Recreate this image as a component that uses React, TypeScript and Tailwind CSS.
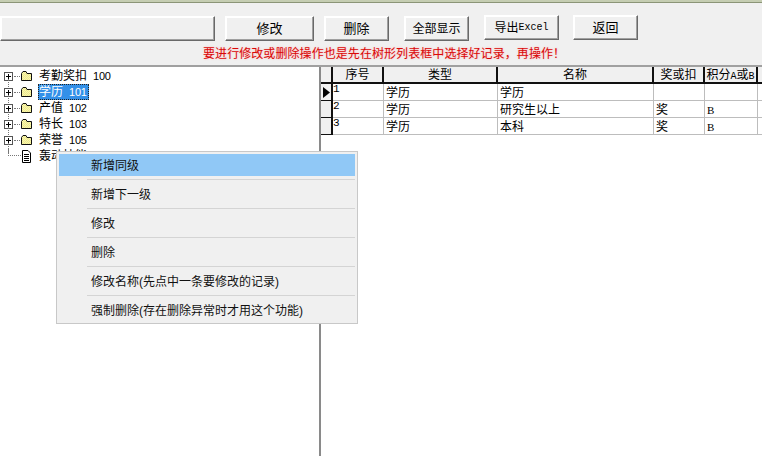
import React from 'react';

const CJK = "font-['Liberation_Sans','Noto_Sans_CJK_SC',sans-serif]";
const MONO = "font-['Liberation_Mono','Noto_Sans_CJK_SC',monospace]";
const SERIF = "font-['Liberation_Serif',serif]";

const TREE = [
  { label: '考勤奖扣', code: '100' },
  { label: '学历', code: '101', selected: true },
  { label: '产值', code: '102' },
  { label: '特长', code: '103' },
  { label: '荣誉', code: '105' },
];

const MENU = [
  '新增同级',
  '新增下一级',
  '修改',
  '删除',
  '修改名称(先点中一条要修改的记录)',
  '强制删除(存在删除异常时才用这个功能)',
];

const COLUMNS = [
  { title: '序号', width: 'w-[51px]' },
  { title: '类型', width: 'w-[114px]' },
  { title: '名称', width: 'w-[156px]' },
  { title: '奖或扣', width: 'w-[51px]' },
  { title: '积分', width: 'w-[53px]' },
];

const ROWS = [
  ['1', '学历', '学历', '', ''],
  ['2', '学历', '研究生以上', '奖', 'B'],
  ['3', '学历', '本科', '奖', 'B'],
];

const Raised = ({ className, children }: { className: string; children?: React.ReactNode }) => (
  <div
    className={`flex items-center justify-center bg-[#f0f0f0] border border-t-white border-l-white border-r-[#696969] border-b-[#696969] shadow-[inset_-1px_-1px_0_#a0a0a0,inset_1px_1px_0_#fff] text-black ${className}`}
  >
    {children}
  </div>
);

const PlusBox = () => (
  <svg width="11" height="11" viewBox="0 0 11 11" className="shrink-0">
    <rect x="1.5" y="1.5" width="8" height="8" fill="#fff" stroke="#555" />
    <path d="M3 5.5h5M5.5 3v5" stroke="#000" />
  </svg>
);

const Folder = () => (
  <svg width="13" height="12" viewBox="0 0 13 12" className="shrink-0">
    <defs>
      <pattern id="dither" width="2" height="2" patternUnits="userSpaceOnUse">
        <rect width="2" height="2" fill="#ffff9c" />
        <rect width="1" height="1" fill="#e8e0a0" />
        <rect x="1" y="1" width="1" height="1" fill="#e8e0a0" />
      </pattern>
    </defs>
    <path d="M1.5 3.5 L3 1.5 H6 L7 3.5 H11.5 V10.5 H1.5 Z" fill="url(#dither)" stroke="#111" />
  </svg>
);

const Doc = () => (
  <svg width="11" height="13" viewBox="0 0 11 13" className="shrink-0">
    <path d="M1.5 .5 H7 L9.5 3 V12.5 H1.5 Z" fill="#fff" stroke="#000" />
    <path d="M3 4.5h5M3 6.5h5M3 8.5h5M3 10.5h5" stroke="#000" />
  </svg>
);

export default function App() {
  return (
    <div className={`relative w-[762px] h-[456px] overflow-hidden flex flex-col bg-[#f0f0f0] text-black ${CJK}`}>
      <div className="h-[3px] shrink-0 bg-[#c5cdb2] border-b border-[#8b9577]" />

      {/* Toolbar */}
      <div className="h-[62px] shrink-0 pt-[13px] flex flex-col">
        <div className="flex h-[25px] items-start text-[13px]">
          <Raised className="w-[215px] h-[25px]" />
          <Raised className="w-[89px] h-[25px] ml-[10px]">修改</Raised>
          <Raised className="w-[65px] h-[25px] ml-[10px]">删除</Raised>
          <Raised className="w-[65px] h-[25px] ml-[15px] text-[12px]">全部显示</Raised>
          <Raised className="w-[75px] h-[25px] ml-[15px] -mt-px text-[12px]">
            导出<span className={`${MONO} text-[10px]`}>Excel</span>
          </Raised>
          <Raised className="w-[65px] h-[25px] ml-[14px] -mt-px">返回</Raised>
        </div>
        <div className="mt-[4px] pl-[203px] h-[18px] leading-[18px] text-[12px] tracking-[0.07px] text-[#d80808] [text-shadow:0_0_2px_#ffb0b0] whitespace-nowrap">
          要进行修改或删除操作也是先在树形列表框中选择好记录，再操作！
        </div>
      </div>

      <div className="flex-1 flex min-h-0 border-t-2 border-[#a0a0a0]">
        {/* Tree */}
        <div className="w-[319px] shrink-0 bg-white pt-[1px] pl-[3px]">
          {TREE.map((node) => (
            <div key={node.code} className="relative h-[16px] flex items-center">
              <div className="absolute left-[5px] top-[11px] h-[10px] border-l border-dotted border-[#777]" />
              <PlusBox />
              <div className="w-[6px] border-t border-dotted border-[#777]" />
              <Folder />
              <span
                className={`ml-[5px] h-[16px] pl-[1px] pr-[2px] leading-[15px] text-[12px] flex items-center ${
                  node.selected ? 'bg-[#3390e8] text-white outline-1 outline-dotted outline-[#222] -outline-offset-1' : ''
                }`}
              >
                {node.label}
                <span className="ml-[6px] text-[11px] tracking-[-0.2px]">{node.code}</span>
              </span>
            </div>
          ))}
          <div className="h-[16px] flex items-center pl-[5px]">
            <div className="w-[13px] h-[8px] border-l border-b border-dotted border-[#777] -mt-[8px]" />
            <Doc />
            <span className="ml-[7px] text-[12px] leading-[15px]">轰动技能</span>
          </div>
        </div>

        {/* Splitter */}
        <div className="w-[2px] shrink-0 bg-[#8a8a8a]" />

        {/* Grid */}
        <div className="flex-1 bg-white text-[12px]">
          <div className="flex h-[17px] border-b-2 border-[#111] bg-[#f0f0f0]">
            <div className="w-[12px] shrink-0 border-r-2 border-[#111]" />
            {COLUMNS.map((col) => (
              <div
                key={col.title}
                className={`${col.width} shrink-0 border-r-2 border-[#111] text-center leading-[16px] whitespace-nowrap`}
              >
                {col.title}
                {col.title === '积分' && (
                  <>
                    <span className={`${MONO} text-[10px]`}>A</span>或<span className={`${MONO} text-[10px]`}>B</span>
                  </>
                )}
              </div>
            ))}
          </div>
          {ROWS.map((row, i) => (
            <div key={row[0]} className="flex h-[17px] border-b border-[#bdbdbd]">
              <div className="w-[12px] shrink-0 -mb-px bg-[#f0f0f0] border-r-2 border-b border-[#111] flex items-center justify-center">
                {i === 0 && (
                  <svg width="7" height="11" viewBox="0 0 7 11">
                    <path d="M0 0L7 5.5L0 11Z" fill="#000" />
                  </svg>
                )}
              </div>
              {row.map((cell, j) => (
                <div
                  key={j}
                  className={`${COLUMNS[j].width} shrink-0 border-r border-[#bdbdbd] whitespace-nowrap ${
                    j === 0
                      ? `${MONO} text-[11px] leading-[10px]`
                      : j === 4
                        ? `${SERIF} text-[11px] leading-[18px] pl-[2px]`
                        : 'leading-[18px] pl-[2px]'
                  }`}
                >
                  {cell}
                </div>
              ))}
            </div>
          ))}
        </div>
      </div>

      {/* Context menu */}
      <div className="absolute left-[56px] top-[151px] w-[302px] h-[173px] bg-[#f0f0f0] border border-[#c8c8c8] p-[2px] text-[12px] text-[#111]">
        {MENU.map((item, i) => (
          <div key={item}>
            {i > 0 && <div className="ml-[28px] h-[1px] my-[3px] bg-[#d4d4d4]" />}
            <div className={`h-[22px] leading-[24px] pl-[32px] whitespace-nowrap ${i === 0 ? 'bg-[#90c8f6]' : ''}`}>
              {item}
            </div>
          </div>
        ))}
      </div>
    </div>
  );
}
